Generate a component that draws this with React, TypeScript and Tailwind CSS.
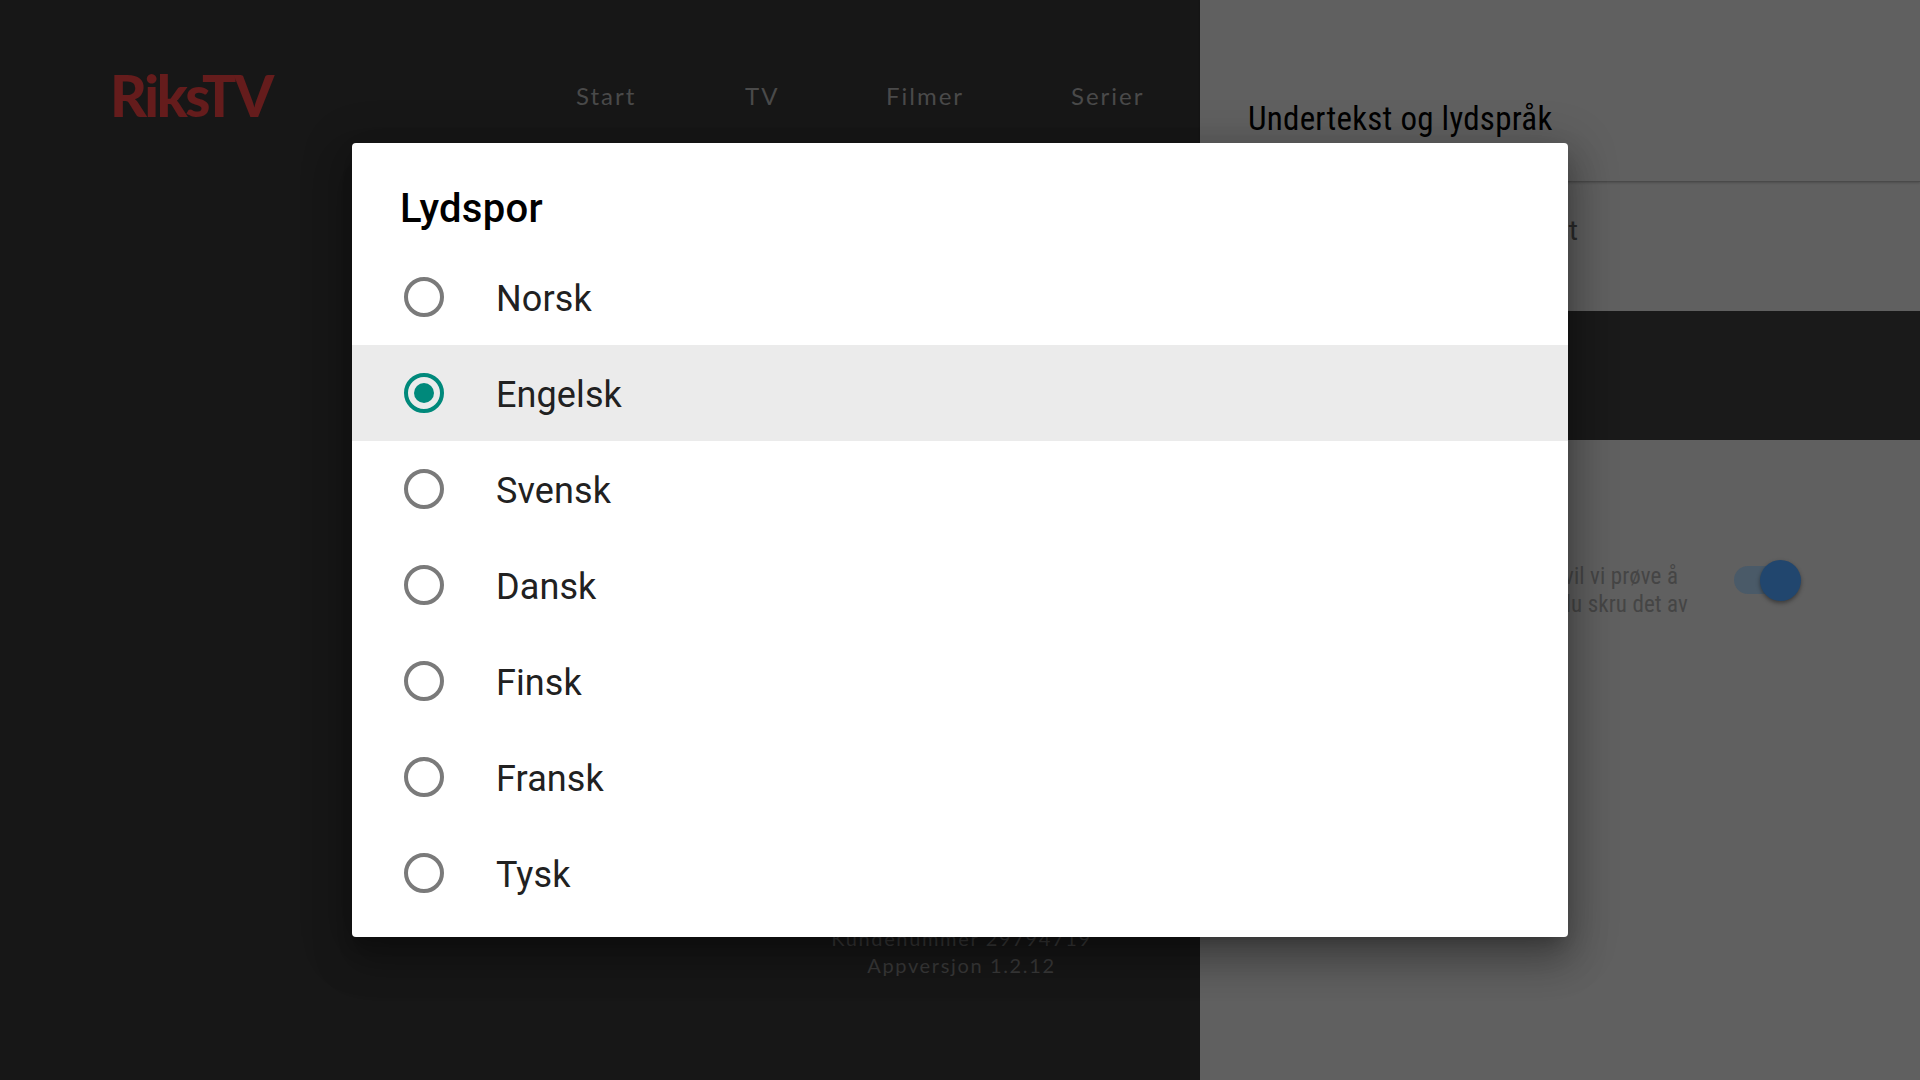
const languages = ["Norsk", "Engelsk", "Svensk", "Dansk", "Finsk", "Fransk", "Tysk"];
const selected = "Engelsk";

const App = () => {
  return (
    <div className="relative w-[1920px] h-[1080px] overflow-hidden bg-[#171717] font-['Roboto',sans-serif] antialiased">
      {/* Page behind the drawer */}
      <div className="flex flex-col h-full">
        <header className="flex items-center h-[192px] pl-[110px] font-['Lato',sans-serif]">
          <span className="w-[466px] text-[57px] font-black tracking-[-2.4px] text-[#651c1c]">RiksTV</span>
          <nav className="flex items-center text-[24px] tracking-[2px] text-[#4a4a4a]">
            <span className="w-[169px]">Start</span>
            <span className="w-[141px]">TV</span>
            <span className="w-[185px]">Filmer</span>
            <span>Serier</span>
          </nav>
        </header>
        <div className="mt-auto pb-[101px] pl-[3px] text-center text-[20px] leading-[27px] tracking-[1.65px] text-[#3a3a3a] font-['Lato',sans-serif]">
          <div>Kundenummer 29794719</div>
          <div>Appversjon 1.2.12</div>
        </div>
      </div>

      {/* Settings drawer */}
      <aside className="absolute top-0 right-0 bottom-0 w-[720px] flex flex-col bg-[#606060]">
        <div className="h-[182px] pl-[48px] pt-[95px] border-b border-[#4a4a4a] shadow-[0_1px_2px_rgba(0,0,0,0.2)]">
          <h2 className="text-[33px] leading-[48px] tracking-[0.25px] text-black [font-stretch:condensed]">Undertekst og lydspråk</h2>
        </div>
        <div className="h-[129px] w-[378px] pt-[27px] text-right text-[28px] leading-[44px] text-[#2b2b2b] whitespace-nowrap">
          Foretrukket undertekst
        </div>
        <div className="h-[129px] bg-[#1a1a1a]" />
        <div className="flex items-start pt-[123px]">
          <p className="w-[488px] text-right text-[23px] leading-[28px] tracking-[0.1px] text-[#454545] whitespace-nowrap [font-stretch:condensed]">
            <span className="pr-[10px]">Når du velger et språk, vil vi prøve å</span>
            <br />
            bruke det neste gang. Vil du skru det av
          </p>
          <div className="relative ml-[46px] mt-[3px] w-[66px] h-[28px] rounded-full bg-[#4a5a68]">
            <div className="absolute right-[-1px] top-[-6px] w-[41px] h-[41px] rounded-full bg-[#21466e] shadow-[0_2px_4px_rgba(0,0,0,0.4)]" />
          </div>
        </div>
      </aside>

      {/* Scrim + dialog */}
      <div className="absolute inset-0 flex items-center justify-center">
        <div className="w-[1216px] h-[794px] rounded-[4px] bg-white pt-[16px] pb-[16px] shadow-[0_24px_38px_3px_rgba(0,0,0,0.2),0_9px_46px_8px_rgba(0,0,0,0.2),0_11px_15px_-7px_rgba(0,0,0,0.2)]">
          <h1 className="h-[90px] pl-[48px] pt-[22px] text-[40px] leading-[56px] font-medium tracking-[0.3px] text-black">Lydspor</h1>
          <ul>
            {languages.map((lang) => (
              <li
                key={lang}
                className={
                  lang === selected
                    ? "flex items-center h-[96px] pl-[52px] bg-[#ebebeb]"
                    : "flex items-center h-[96px] pl-[52px]"
                }
              >
                {lang === selected ? (
                  <span className="flex items-center justify-center w-[40px] h-[40px] rounded-full border-[4px] border-[#00897b]">
                    <span className="w-[20px] h-[20px] rounded-full bg-[#00897b]" />
                  </span>
                ) : (
                  <span className="w-[40px] h-[40px] rounded-full border-[4px] border-[#7a7a7a]" />
                )}
                <span className="ml-[52px] pt-[3px] text-[36px] leading-[48px] tracking-[0.1px] text-[#212121]">{lang}</span>
              </li>
            ))}
          </ul>
        </div>
      </div>
    </div>
  );
};

export default App;
